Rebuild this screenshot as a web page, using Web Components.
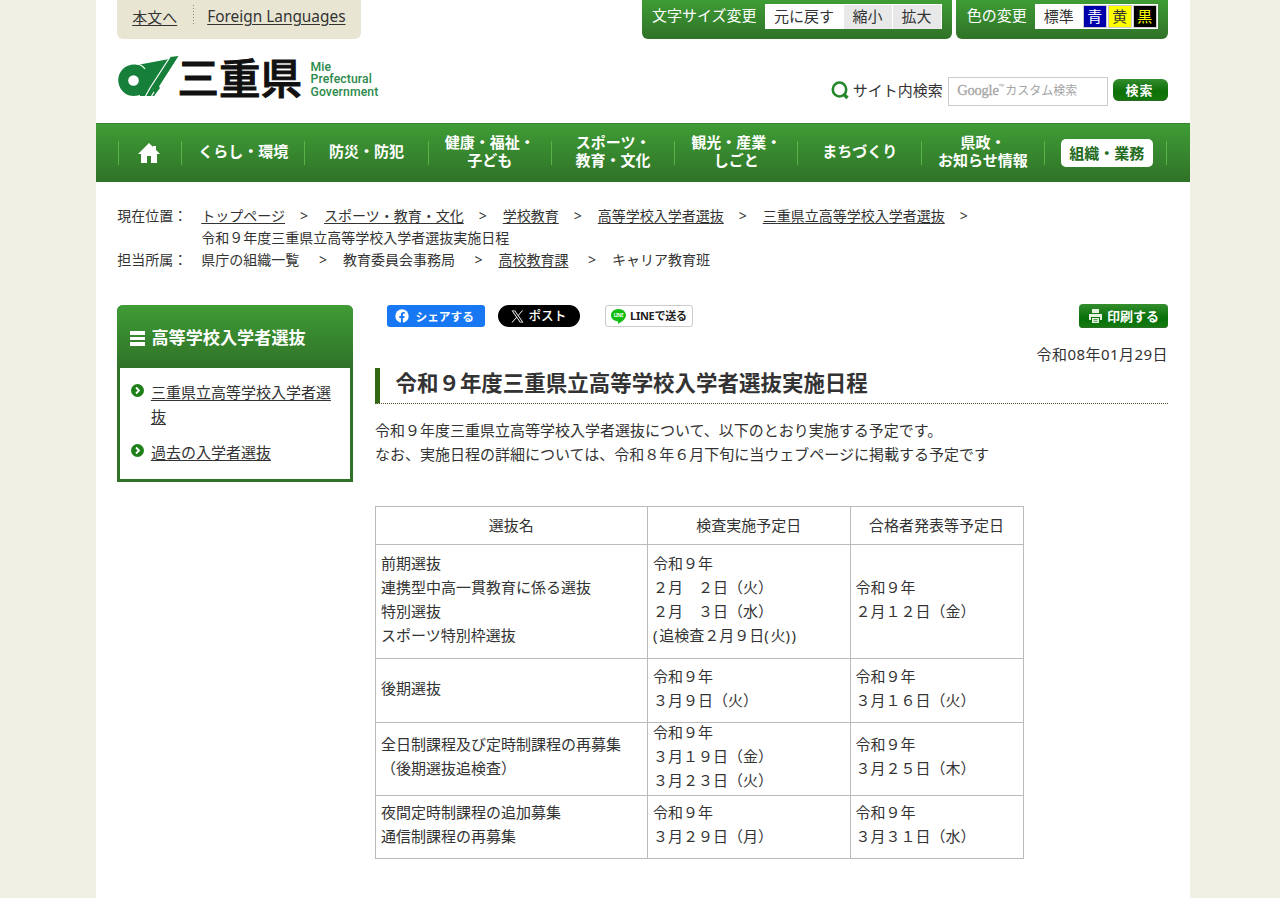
<!DOCTYPE html>
<html lang="ja">
<head>
<meta charset="utf-8">
<title>令和９年度三重県立高等学校入学者選抜実施日程</title>
<style>
  :root {
    --green-top: #3f9c35;
    --green-bottom: #2f7228;
    --green-bar: linear-gradient(var(--green-top), var(--green-bottom));
  }
  body {
    margin: 0;
    height: 898px;
    overflow: hidden;
    background: #f1f0e5;
    color: #333;
    font: 15px/24px "Noto Sans", "Noto Sans CJK JP", sans-serif;
    text-spacing-trim: space-all;
  }
</style>
</head>
<body>
<site-page>
  <top-bar slot="top">
    <a slot="link">本文へ</a>
    <a slot="link" class="wide">Foreign Languages</a>
    <tool-panel label="文字サイズ変更">
      <tool-choice kind="size-main">元に戻す</tool-choice>
      <tool-choice kind="size">縮小</tool-choice>
      <tool-choice kind="size">拡大</tool-choice>
    </tool-panel>
    <tool-panel label="色の変更">
      <tool-choice kind="plain">標準</tool-choice>
      <tool-choice kind="blue">青</tool-choice>
      <tool-choice kind="yellow">黄</tool-choice>
      <tool-choice kind="black">黒</tool-choice>
    </tool-panel>
  </top-bar>

  <site-header slot="top">
    <site-logo></site-logo>
    <site-search slot="search"></site-search>
  </site-header>

  <global-nav slot="top">
    <nav-item home></nav-item>
    <nav-item>くらし・環境</nav-item>
    <nav-item>防災・防犯</nav-item>
    <nav-item>健康・福祉・<br>子ども</nav-item>
    <nav-item>スポーツ・<br>教育・文化</nav-item>
    <nav-item>観光・産業・<br>しごと</nav-item>
    <nav-item>まちづくり</nav-item>
    <nav-item>県政・<br>お知らせ情報</nav-item>
    <nav-item boxed>組織・業務</nav-item>
  </global-nav>

  <bread-crumbs slot="top"></bread-crumbs>

  <side-menu slot="side" heading="高等学校入学者選抜">
    <side-link>三重県立高等学校入学者選抜</side-link>
    <side-link>過去の入学者選抜</side-link>
  </side-menu>

  <share-bar></share-bar>
  <page-article heading="令和９年度三重県立高等学校入学者選抜実施日程" date="令和08年01月29日">
    令和９年度三重県立高等学校入学者選抜について、以下のとおり実施する予定です。<br>
    なお、実施日程の詳細については、令和８年６月下旬に当ウェブページに掲載する予定です
  </page-article>
  <schedule-table></schedule-table>
</site-page>

<script>
class SitePage extends HTMLElement {
  constructor() {
    super();
    this.attachShadow({ mode: "open" });
    this.shadowRoot.innerHTML = `
      <style>
        :host {
          display: block;
          box-sizing: border-box;
          width: 1094px;
          min-height: 898px;
          margin: 0 90px 0 96px;
          background: #fff;
        }
        .columns {
          display: grid;
          grid-template-columns: 236px 793.5px;
          column-gap: 21.6px;
          align-items: start;
          padding: 33px 0 0 21.4px;
        }
      </style>
      <slot name="top"></slot>
      <div class="columns">
        <slot name="side"></slot>
        <main><slot></slot></main>
      </div>
    `;
  }
}

class TopBar extends HTMLElement {
  constructor() {
    super();
    this.attachShadow({ mode: "open" });
    this.shadowRoot.innerHTML = `
      <style>
        :host {
          display: flex;
          height: 38.5px;
          padding: 0 21.8px 0 21.2px;
          gap: 4px;
        }
        .links {
          display: flex;
          box-sizing: border-box;
          width: 244px;
          margin-right: auto;
          padding: 5px 0 0 15px;
          background: #e8e6d3;
          border-radius: 0 0 6px 6px;
        }
        ::slotted(a) {
          height: 24px;
          text-decoration: underline;
          text-underline-offset: 2px;
        }
        ::slotted(a.wide) {
          margin-left: 16px;
          padding-left: 14px;
          font-size: 15.4px;
          background: linear-gradient(#888 50%, transparent 50%) 0 3px / 1px 3px repeat-y;
          height: 20px;
          white-space: nowrap;
        }
      </style>
      <div class="links"><slot name="link"></slot></div>
      <slot></slot>
    `;
  }
}

class ToolPanel extends HTMLElement {
  constructor() {
    super();
    this.attachShadow({ mode: "open" });
    this.shadowRoot.innerHTML = `
      <style>
        :host {
          display: flex;
          box-sizing: border-box;
          align-items: flex-start;
          gap: 8px;
          padding: 4px 10.5px 0;
          color: #fff;
          background: var(--green-bar);
          border-radius: 0 0 6px 6px;
        }
        .label { margin-top: -1px; }
        .choices {
          display: flex;
          height: 24.5px;
          background: #fff;
        }
      </style>
      <span class="label">${this.getAttribute("label")}</span>
      <div class="choices"><slot></slot></div>
    `;
  }
}

class ToolChoice extends HTMLElement {
  constructor() {
    super();
    this.attachShadow({ mode: "open" });
    this.shadowRoot.innerHTML = `
      <style>
        :host {
          display: block;
          box-sizing: border-box;
          padding: 0 9px;
          color: #333;
          line-height: 24px;
        }
        :host([kind="size-main"]) { padding: 0 9.5px; }
        :host([kind="size"]) {
          background: #e8e8e8;
          border-right: 1px solid #fff;
          border-top: 1px solid #fff;
          line-height: 22px;
        }
        :host([kind="blue"]), :host([kind="yellow"]), :host([kind="black"]) {
          padding: 0 3.5px;
          margin: 1px 1px 1px 0;
          border: 1px solid #ccc;
          line-height: 21px;
        }
        :host([kind="blue"]) { background: #00a; color: #fff; }
        :host([kind="yellow"]) { background: #ff0; }
        :host([kind="black"]) { background: #000; color: #ff0; }
      </style>
      <slot></slot>
    `;
  }
}

class SiteHeader extends HTMLElement {
  constructor() {
    super();
    this.attachShadow({ mode: "open" });
    this.shadowRoot.innerHTML = `
      <style>
        :host {
          display: flex;
          box-sizing: border-box;
          justify-content: space-between;
          align-items: flex-start;
          height: 84.5px;
          padding: 15.5px 21.8px 0 22px;
        }
      </style>
      <slot></slot>
      <slot name="search"></slot>
    `;
  }
}

class SiteLogo extends HTMLElement {
  constructor() {
    super();
    this.attachShadow({ mode: "open" });
    this.shadowRoot.innerHTML = `
      <style>
        :host { display: flex; height: 47px; padding-top: 1px; box-sizing: border-box; }
        .name {
          width: 126px;
          margin: -2px 0 0 -1.5px;
          font: 500 41.5px/46px "Noto Sans CJK JP", sans-serif;
          color: #111;
          -webkit-text-stroke: 1px #111;
          white-space: nowrap;
        }
        .roman {
          margin: 5.5px 0 0 7px;
          font: 500 12.2px/12.5px Roboto, sans-serif;
          color: #2b8a4a;
          letter-spacing: 0.12px;
        }
      </style>
      <svg width="61" height="46" viewBox="0 0 61 46">
        <path d="M19 10 54 3.500 41 24 34 35 39 36 36 41H22Z" fill="#16803a"/>
        <path d="M16 9.500C21 9.500 25 12 28 16L35 12 31 22C32 32 27 41 16 41A15.700 15.700 0 0 1 16 9.500Z" fill="#16803a"/>
        <path d="M52 2 60.500 1 41 31.500 42 33 36 41H30L35 33 33 31Z" fill="#16803a"/>
        <path d="M17 8.500C22 9 25 11 27 14M52 2 32 33 27 42M36 37 33 42" fill="none" stroke="#fff" stroke-width="1.200"/>
        <circle cx="15.500" cy="25.500" r="5.300" fill="#fff"/>
      </svg>
      <span class="name">三重県</span>
      <div class="roman">Mie<br>Prefectural<br>Government</div>
    `;
  }
}

class SiteSearch extends HTMLElement {
  constructor() {
    super();
    this.attachShadow({ mode: "open" });
    this.shadowRoot.innerHTML = `
      <style>
        :host {
          display: flex;
          align-items: flex-start;
          padding-top: 23px;
        }
        svg { margin: 4px 3px 0 0; }
        .label { margin-right: 5px; line-height: 26px; }
        .field {
          display: flex;
          box-sizing: border-box;
          width: 160.5px;
          height: 28.5px;
          margin-right: 4.5px;
          padding-left: 8.5px;
          border: 1px solid #ccc;
          color: #a5a5a5;
          font-size: 12px;
          line-height: 25px;
        }
        .google { font: 14.5px/25px "Liberation Serif", serif; letter-spacing: -0.2px; -webkit-text-stroke: 0.3px #a5a5a5; }
        .tm { font-size: 7px; line-height: 18px; margin-right: 1px; }
        button {
          box-sizing: border-box;
          width: 55.5px;
          height: 22px;
          margin: 2px 0 0;
          padding: 0 2px 1px 0;
          border: 0;
          border-radius: 6px;
          color: #fff;
          background: linear-gradient(#348d2e, #0e6f08 55%, #147a0b);
          font: 700 13px/20px "Noto Sans CJK JP", sans-serif;
          letter-spacing: 1px;
          box-shadow: inset 0 -1px #2c6927;
        }
      </style>
      <svg width="19" height="19" viewBox="0 0 19 19" fill="none" stroke="#25882c">
        <ellipse cx="8.500" cy="8.500" rx="6.700" ry="7" stroke-width="2.600"/>
        <path d="M12.500 13 16.500 17" stroke-width="3.400"/>
      </svg>
      <span class="label">サイト内検索</span>
      <div class="field"><span class="google">Google</span><span class="tm">™</span>カスタム検索</div>
      <button>検索</button>
    `;
  }
}

class GlobalNav extends HTMLElement {
  constructor() {
    super();
    this.attachShadow({ mode: "open" });
    this.shadowRoot.innerHTML = `
      <style>
        :host {
          display: grid;
          box-sizing: border-box;
          grid-template-columns: 63px repeat(8, 123.3px);
          align-items: center;
          height: 59px;
          padding: 0 0 3px 22px;
          background: var(--green-bar);
          border-top: 1px solid #388530;
        }
      </style>
      <slot></slot>
    `;
  }
}

class NavItem extends HTMLElement {
  constructor() {
    super();
    this.attachShadow({ mode: "open" });
    this.shadowRoot.innerHTML = `
      <style>
        :host {
          display: flex;
          box-sizing: border-box;
          align-items: center;
          justify-content: center;
          height: 24px;
          margin-top: 3px;
          border-left: 1px solid #58b348;
          color: #fff;
          font-weight: 700;
          line-height: 18px;
          text-align: center;
          white-space: nowrap;
        }
        :host(:last-child) { border-right: 1px solid #58b348; }
        svg { margin-right: 2px; }
        span { display: block; margin-top: -4px; }
        :host([boxed]) span {
          margin: 0 0 0 2px;
          padding: 0 8.5px;
          border-radius: 5px;
          color: #236b20;
          background: #fff;
          line-height: 28px;
        }
      </style>
      ${this.hasAttribute("home")
        ? `<svg width="22" height="20" viewBox="0 0 22 20"><path d="M11 0 0 11H3V20H9V13H13V20H19V11H22L18 7V3H15V4Z" fill="#fff"/></svg>`
        : "<span><slot></slot></span>"}
    `;
  }
}

class BreadCrumbs extends HTMLElement {
  static place = ["トップページ", "スポーツ・教育・文化", "学校教育", "高等学校入学者選抜", "三重県立高等学校入学者選抜"];

  constructor() {
    super();
    this.attachShadow({ mode: "open" });
    const links = BreadCrumbs.place.map((t) => `<a>${t}</a><i>&gt;</i>`).join("");
    this.shadowRoot.innerHTML = `
      <style>
        :host {
          display: grid;
          grid-template-columns: 84px 1fr;
          grid-auto-rows: 22px;
          padding: 23px 21.3px 1px;
          font-size: 14px;
          line-height: 22px;
        }
        .row { display: flex; white-space: nowrap; }
        .second { grid-column: 2; }
        a { text-decoration: underline; text-underline-offset: 2px; }
        i { width: 9px; margin: 0 15px; font-style: normal; }
        .dept i { margin: 0 15px 0 19.6px; }
      </style>
      <span>現在位置：</span><div class="row">${links}</div>
      <div class="second">令和９年度三重県立高等学校入学者選抜実施日程</div>
      <span>担当所属：</span>
      <div class="row dept">県庁の組織一覧<i>&gt;</i>教育委員会事務局<i>&gt;</i><a>高校教育課</a><i>&gt;</i>キャリア教育班</div>
    `;
  }
}

class SideMenu extends HTMLElement {
  constructor() {
    super();
    this.attachShadow({ mode: "open" });
    this.shadowRoot.innerHTML = `
      <style>
        :host {
          display: block;
          box-sizing: border-box;
          height: 177px;
          border: solid #2f7228;
          border-width: 0 3px 3px;
          border-radius: 6px 6px 0 0;
        }
        h2 {
          display: flex;
          align-items: center;
          gap: 6px;
          height: 63px;
          margin: 0 -3px 11.5px;
          padding: 2px 0 0 13px;
          box-sizing: border-box;
          border-radius: 6px 6px 0 0;
          background: var(--green-bar);
          color: #fff;
          font-size: 17.15px;
        }
        .bars {
          width: 15px;
          height: 15px;
          margin-top: 2px;
          background: linear-gradient(#fff 0 4px, transparent 4px 6px, #fff 6px 9px, transparent 9px 11px, #fff 11px);
        }
      </style>
      <h2><span class="bars"></span>${this.getAttribute("heading")}</h2>
      <slot></slot>
    `;
  }
}

class SideLink extends HTMLElement {
  constructor() {
    super();
    this.attachShadow({ mode: "open" });
    this.shadowRoot.innerHTML = `
      <style>
        :host {
          display: grid;
          grid-template-columns: 13px 182px;
          column-gap: 7px;
          margin: 0 0 12px 10.5px;
        }
        svg { margin-top: 4px; }
        a { text-decoration: underline; text-underline-offset: 2px; word-break: break-all; }
      </style>
      <svg width="13" height="13" viewBox="0 0 13 13">
        <circle cx="6.500" cy="6.500" r="6.500" fill="#1d8018"/>
        <path d="M5 3.500 8 6.500 5 9.500" fill="none" stroke="#fff" stroke-width="1.800"/>
      </svg>
      <a><slot></slot></a>
    `;
  }
}

class ShareBar extends HTMLElement {
  constructor() {
    super();
    this.attachShadow({ mode: "open" });
    this.shadowRoot.innerHTML = `
      <style>
        :host { display: flex; height: 22px; padding-left: 12.5px; }
        div {
          display: flex;
          box-sizing: border-box;
          align-items: center;
          white-space: nowrap;
          line-height: 20px;
        }
        .facebook {
          width: 98px;
          padding-left: 8px;
          gap: 6px;
          border-radius: 3px;
          background: #1877f2;
          color: #fff;
          font-size: 11.7px;
          font-weight: 600;
        }
        .post {
          width: 82.5px;
          margin-left: 12.5px;
          padding-left: 13.5px;
          gap: 4px;
          border-radius: 11px;
          background: #000;
          color: #fff;
          font-size: 12.6px;
          font-weight: 500;
        }
        .line {
          width: 88px;
          margin-left: 24.5px;
          padding-left: 5px;
          gap: 4px;
          border: 1px solid #ccc;
          border-radius: 3px;
          color: #222;
          font-size: 11px;
          font-weight: 700;
          letter-spacing: -0.25px;
        }
        .print {
          width: 89.5px;
          height: 24.5px;
          margin: -1.5px 0 0 auto;
          padding-left: 10px;
          gap: 5px;
          border-radius: 4px;
          background: linear-gradient(#348d2e, #08700a 60%, #167b10);
          box-shadow: inset 0 -1px #2c7027;
          color: #fff;
          font-size: 13px;
          font-weight: 700;
        }
      </style>
      <div class="facebook">
        <svg width="14" height="14" viewBox="0 0 14 14">
          <circle cx="7" cy="7" r="6.700" fill="#fff"/>
          <path d="M5.900 14V9H4.300V7.100H5.900V5.700C5.900 3.900 6.900 3 8.500 3L9.700 3.100V4.800H8.800C8 4.800 7.900 5.300 7.900 5.900V7.100H9.600L9.300 9H7.900V14Z" fill="#1877f2"/>
        </svg>シェアする
      </div>
      <div class="post">
        <svg width="13" height="13" viewBox="0 0 24 24" fill="#fff">
          <path fill-rule="evenodd" d="M14.100 10.300 22.300 1H20.400L13.200 9.100 7.600 1H1L9.600 13.200 1 23H2.900L10.500 14.500 16.400 23H23ZM3.700 2.400H6.600L20.300 21.600H17.400Z"/>
        </svg>ポスト
      </div>
      <div class="line">
        <svg width="15" height="15" viewBox="0 0 15 15">
          <path d="M7.500 0C3.400 0 0 2.800 0 6.200 0 9.300 2.700 11.700 6.400 12.300 7.400 12.500 7 13.400 6.900 14.700 8.500 14.300 15 10.500 15 6.200 15 2.800 11.600 0 7.500 0Z" fill="#10bd10"/>
          <text x="7.500" y="8" text-anchor="middle" fill="#fff" font-size="4.500" font-weight="700">LINE</text>
        </svg>LINEで送る
      </div>
      <div class="print">
        <svg width="13" height="14" viewBox="0 0 13 14">
          <path d="M3 0H10V4H3ZM0 5H13V11H11V8H2V11H0ZM3 9H10V14H3Z" fill="#e6f2e1"/>
          <path d="M4.500 10.500H8.500M4.500 12.300H8.500" stroke="#58a050"/>
        </svg>印刷する
      </div>
    `;
  }
}

class PageArticle extends HTMLElement {
  constructor() {
    super();
    this.attachShadow({ mode: "open" });
    this.shadowRoot.innerHTML = `
      <style>
        :host { display: block; padding-top: 15px; }
        .date { text-align: right; letter-spacing: 0.45px; margin-right: 0.5px; }
        h1 {
          box-sizing: border-box;
          height: 35.5px;
          margin: 2px 0 14px;
          padding-left: 15.5px;
          border-left: 5px solid #336610;
          border-bottom: 1px dotted #4d4d2c;
          font-size: 21.47px;
          line-height: 30px;
        }
        p { margin: 0; }
      </style>
      <div class="date">${this.getAttribute("date")}</div>
      <h1>${this.getAttribute("heading")}</h1>
      <p><slot></slot></p>
    `;
  }
}

class ScheduleTable extends HTMLElement {
  static head = ["選抜名", "検査実施予定日", "合格者発表等予定日"];
  static rows = [
    [114, "前期選抜<br>連携型中高一貫教育に係る選抜<br>特別選抜<br>スポーツ特別枠選抜",
      "令和９年<br>２月　２日（火）<br>２月　３日（水）<br><i>(</i>追検査２月９日<i>(</i>火<i>))</i>", "令和９年<br>２月１２日（金）"],
    [63.5, "後期選抜", "令和９年<br>３月９日（火）", "令和９年<br>３月１６日（火）"],
    [73, "全日制課程及び定時制課程の再募集<br>（後期選抜追検査）",
      "令和９年<br>３月１９日（金）<br>３月２３日（火）", "令和９年<br>３月２５日（木）"],
    [63, "夜間定時制課程の追加募集<br>通信制課程の再募集", "令和９年<br>３月２９日（月）", "令和９年<br>３月３１日（水）"],
  ];

  constructor() {
    super();
    this.attachShadow({ mode: "open" });
    const body = ScheduleTable.rows
      .map(([h, ...cells]) => `<tr style="height:${h}px">${cells.map((c) => `<td><div>${c}</div></td>`).join("")}</tr>`)
      .join("");
    this.shadowRoot.innerHTML = `
      <style>
        :host { display: block; margin-top: 40.5px; }
        table {
          width: 649px;
          border-collapse: collapse;
          table-layout: fixed;
        }
        th, td {
          padding: 0 5px 2px 4px;
          border: 1px solid #bbb;
          font-weight: 400;
          line-height: 24px;
          vertical-align: middle;
        }
        td { padding: 0 4px 0 5px; }
        td + td { padding-left: 4.5px; }
        td div { margin: -2.3px 0 2.3px; }
        i { font-style: normal; letter-spacing: 1.7px; }
        thead tr { height: 38px; }
      </style>
      <table>
        <colgroup><col style="width:272.5px"><col style="width:202.5px"><col></colgroup>
        <thead><tr>${ScheduleTable.head.map((t) => `<th>${t}</th>`).join("")}</tr></thead>
        <tbody>${body}</tbody>
      </table>
    `;
  }
}

customElements.define("site-page", SitePage);
customElements.define("top-bar", TopBar);
customElements.define("tool-panel", ToolPanel);
customElements.define("tool-choice", ToolChoice);
customElements.define("site-header", SiteHeader);
customElements.define("site-logo", SiteLogo);
customElements.define("site-search", SiteSearch);
customElements.define("global-nav", GlobalNav);
customElements.define("nav-item", NavItem);
customElements.define("bread-crumbs", BreadCrumbs);
customElements.define("side-menu", SideMenu);
customElements.define("side-link", SideLink);
customElements.define("share-bar", ShareBar);
customElements.define("page-article", PageArticle);
customElements.define("schedule-table", ScheduleTable);
</script>
</body>
</html>
